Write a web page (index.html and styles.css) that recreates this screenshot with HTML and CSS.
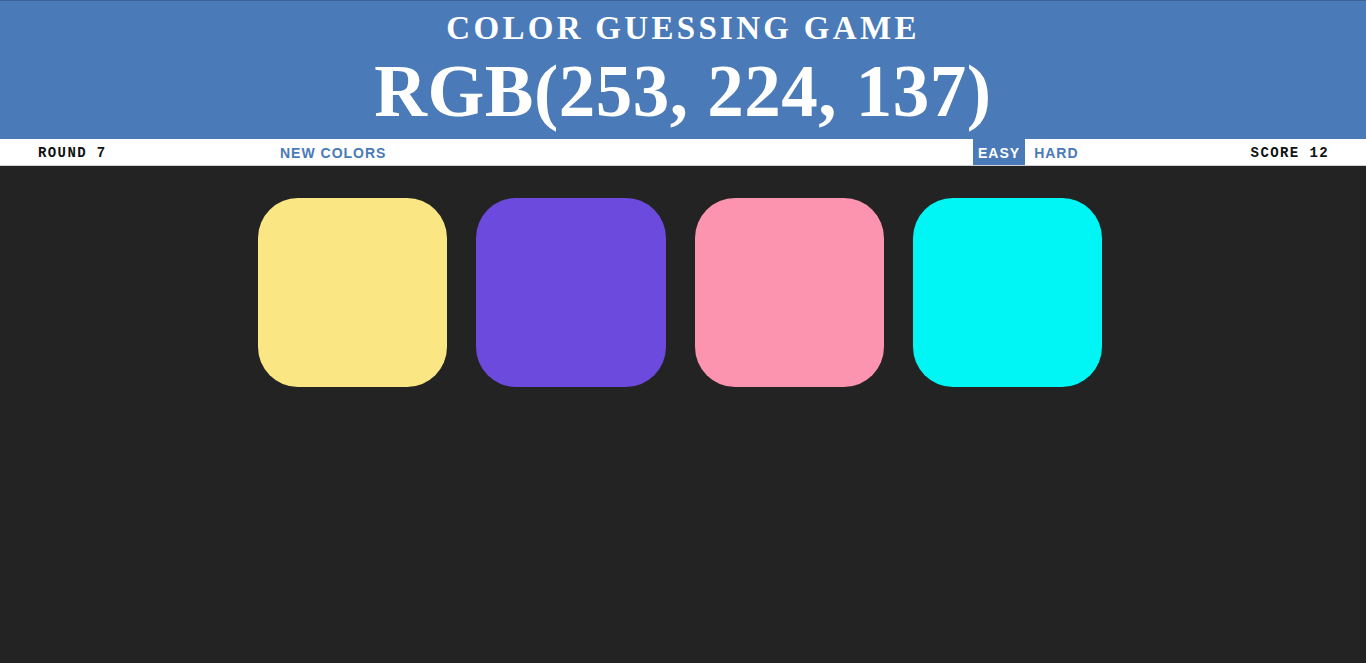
FILE: index.html
```html
<!DOCTYPE html>
<html lang="en">
<head>
<meta charset="utf-8">
<title>Color Guessing Game</title>
<link rel="stylesheet" href="styles.css">
</head>
<body>
<header class="header">
  <h1 class="title">
    <span class="title-sub">COLOR GUESSING GAME</span>
    <span class="title-rgb">RGB(253, 224, 137)</span>
  </h1>
</header>
<nav class="stripe">
  <span class="stat stat-round">ROUND 7</span>
  <button class="btn">NEW COLORS</button>
  <div class="modes">
    <button class="btn mode selected">EASY</button>
    <button class="btn mode">HARD</button>
  </div>
  <span class="stat stat-score">SCORE 12</span>
</nav>
<main class="board">
  <div class="square sq-yellow"></div>
  <div class="square sq-purple"></div>
  <div class="square sq-pink"></div>
  <div class="square sq-cyan"></div>
</main>
</body>
</html>
```

FILE: styles.css
```css
html, body {
  margin: 0;
  padding: 0;
}
body {
  background: #232323;
  min-height: 663px;
  font-family: "Liberation Sans", Arial, sans-serif;
}
.header {
  background: #4a7ab7;
  border-top: 1px solid #3d6496;
  height: 138px;
  box-sizing: content-box;
  overflow: hidden;
}
.title {
  margin: 0;
  color: #ffffff;
  font-family: "Liberation Serif", "Times New Roman", serif;
  font-weight: bold;
  text-align: center;
}
.title-sub {
  display: block;
  font-size: 33px;
  letter-spacing: 3.3px;
  line-height: 33px;
  padding-top: 11px;
}
.title-rgb {
  display: block;
  font-size: 73px;
  letter-spacing: 0.5px;
  line-height: 73px;
  padding-top: 10px;
}
.stripe {
  background: #ffffff;
  height: 26px;
  display: flex;
  align-items: stretch;
  padding: 0 37px 0 38px;
  border-bottom: 1px solid #d0d0d0;
  box-sizing: content-box;
}
.stat {
  display: flex;
  align-items: center;
  padding-top: 2px;
  font-family: "Liberation Mono", "Courier New", monospace;
  font-weight: bold;
  font-size: 14px;
  letter-spacing: 1.4px;
  color: #111111;
}
.stat-round {
  width: 242px;
}
.stat-score {
  margin-left: 167px;
}
.btn {
  border: none;
  background: none;
  font-family: "Liberation Sans", Arial, sans-serif;
  font-weight: bold;
  font-size: 14px;
  letter-spacing: 1px;
  color: #4a7ab7;
  padding: 2px 0 0;
  margin: 0;
  height: 26px;
  cursor: pointer;
}
.modes {
  margin-left: auto;
  display: flex;
  gap: 4px;
}
.mode {
  padding: 2px 5px 0;
}
.mode.selected {
  background: #4a7ab7;
  color: #ffffff;
}
.board {
  display: flex;
  justify-content: center;
  gap: 29px;
  padding: 32px 6px 0 0;
}
.square {
  width: 189.4px;
  height: 189px;
  border-radius: 40px;
}
.sq-yellow { background: #fae784; }
.sq-purple { background: #6c4ade; }
.sq-pink { background: #fc94af; }
.sq-cyan { background: #00f5f5; }
```
